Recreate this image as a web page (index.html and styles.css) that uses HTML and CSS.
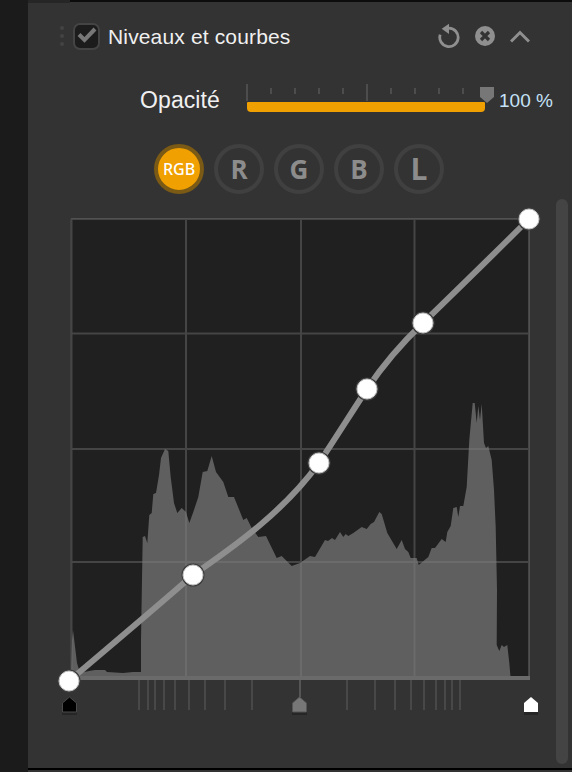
FILE: index.html
```html
<!DOCTYPE html>
<html lang="fr">
<head>
    <meta charset="UTF-8">
    <meta name="viewport" content="width=device-width, initial-scale=1.0">
    <title>Niveaux et courbes</title>
    <link rel="stylesheet" href="styles.css">
</head>
<body>
    <div class="gutter"></div>
    <div class="panel">
        <div class="topbar"><div class="topbar-left"></div><div class="topbar-right"></div></div>
        <div class="header">
            <div class="grip"><span></span><span></span><span></span></div>
            <div class="check">
                <svg width="22" height="22" viewBox="0 0 22 22"><path d="M3 9.500 L8.500 15 L19 4" fill="none" stroke="#787878" stroke-width="4"/></svg>
            </div>
            <div class="title">Niveaux et courbes</div>
            <div class="tools">
                <svg width="22" height="26" viewBox="0 0 22 26"><path d="M11 5.200 A9.200 9.200 0 1 1 2.200 11.600" fill="none" stroke="#8f8f8f" stroke-width="2.800"/><path d="M3.700 5.700 L11 0.700 V11 Z" fill="#8f8f8f"/></svg>
                <svg width="20" height="20" viewBox="0 0 20 20"><circle cx="10" cy="10" r="10" fill="#8f8f8f"/><path d="M6 6 L14 14 M14 6 L6 14" stroke="#333" stroke-width="3.200"/></svg>
                <svg width="20" height="13" viewBox="0 0 20 13"><path d="M1 11.500 L10 2.500 L19 11.500" fill="none" stroke="#8f8f8f" stroke-width="3"/></svg>
            </div>
        </div>

        <div class="opacity">
            <div class="opacity-label">Opacité</div>
            <div class="slider">
                <svg class="ticks" width="240" height="17" viewBox="0 0 240 17">
                    <path d="M1 0V17M121 0V17" stroke="#4d4d4d" stroke-width="2"/>
                    <path d="M25 4V10M49 4V10M73 4V10M97 4V10M145 4V10M169 4V10M193 4V10M217 4V10" stroke="#4d4d4d" stroke-width="2"/>
                </svg>
                <div class="slider-bar"></div>
                <svg class="slider-thumb" width="14" height="16" viewBox="0 0 14 16"><path d="M0 0 H14 V10 L7 16 L0 10 Z" fill="#777"/></svg>
            </div>
            <div class="opacity-value">100 %</div>
        </div>

        <div class="channels">
            <div class="channel active">RGB</div>
            <div class="channel">R</div>
            <div class="channel">G</div>
            <div class="channel">B</div>
            <div class="channel channel-l">L</div>
        </div>

        <div class="curve-row">
            <svg class="curve" width="528" height="565" viewBox="28 199 528 565">
                <rect x="71" y="219" width="458" height="460" fill="#202020"/>
                <path fill="#5f5f5f" d="M71 679 L72 640 L73 630 L77 663 L80 673 L89 671 L95 670 L105 670 L107 672 L123 673 L133 672 L141 672 L141 640 L142.700 537 L145 536 L147.300 543 L149.300 515 L151.700 513 L153.300 494 L156 493 L159 475 L161 458 L165 449 L168.300 451 L170.700 477 L174 503 L177.300 513 L181.700 508 L186 512 L189.300 523 L193.300 512 L198.300 497 L202.700 472 L207.300 471 L211.700 456 L216 472 L223.300 482 L228.300 497 L234 497 L243.300 520 L246.700 518 L251.700 528 L258.300 537 L266 536 L276.700 558 L281.700 556 L291.700 566 L300 563 L310 556 L315 557 L325 540 L328 541 L332 538 L335 540 L340 532 L343.300 537 L345.700 534 L348.300 536 L353.300 533 L361.700 527 L366.700 529 L370.700 524 L374 522 L379.300 512 L381.700 514 L387.300 533 L396.700 549 L401.700 540 L405 549 L408.300 552 L410.700 558 L416.700 558 L418.700 565 L428.300 557 L431.700 548 L435 548 L441.700 539 L445.700 542 L447.300 532 L450.700 526 L453.300 508 L456.700 507 L458.300 517 L460 506 L463.300 506 L466.700 487 L469.300 440 L472.700 403 L474.700 403 L476.700 423 L478.300 406 L480 420 L481.700 404 L484 443 L486 448 L488.300 446 L491.700 460 L494 490 L495.700 527 L497 590 L496.700 645 L499.300 651 L501.700 645 L504 647 L507.300 645 L509.300 663 L510.700 679 Z"/>
                <path fill="none" stroke="#7c7c7c" stroke-opacity=".41" stroke-width="2" d="M71 219H530M71 333.500H530M71 449H530M71 562H530M71.500 219V679M186 219V679M301 219V679M414.500 219V679M529 219V679"/>
                <path fill="none" stroke="#6a6a6a" stroke-width="4" d="M71 678H530"/>
                <path fill="none" stroke="#484848" stroke-width="2" d="M139 680V710M148 680V710M155 680V710M164 680V710M175 680V710M189 680V710M205 680V710M225 680V710M252 680V710M347 680V710M375 680V710M395 680V710M411 680V710M424 680V710M436 680V710M445 680V710M452 680V710M460 680V710"/>
                <path fill="none" stroke="#555" stroke-width="2" d="M300 680V697"/>
                <path fill="none" stroke="#8e8e8e" stroke-width="6" d="M69 681 C90 663 152 611 193 575 C238 544 285 510 319 463 C333 442 350 415 367 389 C385 362 402 343 423 323 C458 289 494 254 529 219"/>
                <g fill="#3c3c3c">
                    <circle cx="69" cy="681" r="11.500"/>
                    <circle cx="193" cy="575" r="11.500"/>
                    <circle cx="319" cy="463" r="11.500"/>
                    <circle cx="367" cy="389" r="11.500"/>
                    <circle cx="423" cy="323" r="11.500"/>
                    <circle cx="529" cy="219" r="11.500"/>
                </g>
                <g fill="#fff" stroke="#c4c4c4">
                    <circle cx="69" cy="681" r="10"/>
                    <circle cx="193" cy="575" r="10"/>
                    <circle cx="319" cy="463" r="10"/>
                    <circle cx="367" cy="389" r="10"/>
                    <circle cx="423" cy="323" r="10"/>
                    <circle cx="529" cy="219" r="10"/>
                </g>
                <g stroke-linejoin="round">
                    <path d="M62 715H77V712H62Z" fill="#262626"/>
                    <path d="M62.500 712H76.500V703L69.500 697L62.500 703Z" fill="#000" stroke="#4a4a4a"/>
                    <path d="M292 715H307V712H292Z" fill="#262626"/>
                    <path d="M292.500 712H306.500V703L299.500 697L292.500 703Z" fill="#777" stroke="#555"/>
                    <path d="M524 715H538V712H524Z" fill="#262626"/>
                    <path d="M524 712H538V703L531 697L524 703Z" fill="#fff"/>
                </g>
            </svg>
            <div class="scrollbar"></div>
        </div>
    </div>
</body>
</html>
```
FILE: styles.css
```css
html, body {
    margin: 0;
    padding: 0;
    height: 100%;
    overflow: hidden;
}

body {
    background-color: #333;
    color: #f0f0f0;
    font-family: 'Liberation Sans', Arial, sans-serif;
    display: flex;
    height: 772px;
}

.gutter {
    width: 28px;
    height: 772px;
    background-color: #1b1b1b;
}

.panel {
    width: 544px;
    height: 770px;
    border-bottom: 2px solid #000;
    box-sizing: border-box;
    background-color: #333;
    display: flex;
    flex-direction: column;
}

.topbar {
    display: flex;
    align-items: flex-start;
    height: 3px;
}
.topbar-left {
    width: 42px;
    height: 3px;
    background-color: #262626;
}
.topbar-right {
    flex: 1;
    height: 2px;
    background-color: #0c0c0c;
}

.header {
    display: flex;
    align-items: center;
    height: 66px;
    padding-left: 32px;
}

.grip {
    display: flex;
    flex-direction: column;
    gap: 4px;
    width: 13px;
}
.grip span {
    display: block;
    width: 4px;
    height: 4px;
    border-radius: 50%;
    background-color: #444;
}

.check {
    width: 27px;
    height: 27px;
    box-sizing: border-box;
    border: 2px solid #444;
    border-radius: 7px;
    background-color: #1c1c1c;
    display: flex;
    align-items: center;
    justify-content: center;
}

.title {
    font-size: 21px;
    letter-spacing: 0.15px;
    margin-left: 8px;
    padding-top: 2px;
    flex: 1;
}

.tools {
    display: flex;
    align-items: center;
    gap: 15px;
    margin-right: 42px;
}

.opacity {
    display: flex;
    align-items: center;
    height: 57px;
}

.opacity-label {
    font-size: 23px;
    letter-spacing: 0.1px;
    margin-left: 112px;
    width: 106px;
    padding-top: 6px;
}

.slider {
    position: relative;
    width: 240px;
    height: 28px;
}
.slider .ticks {
    display: block;
}
.slider-bar {
    height: 10px;
    margin-top: 1px;
    margin-left: 1px;
    margin-right: 1px;
    background-color: #f0a000;
    border-radius: 1px 1px 4px 4px;
}
.slider-thumb {
    position: absolute;
    right: -8px;
    top: 3px;
}

.opacity-value {
    font-size: 19px;
    color: #c6e2f6;
    margin-left: 13px;
    padding-top: 6px;
}

.channels {
    display: flex;
    gap: 10px;
    margin-left: 126px;
    margin-top: 18px;
    height: 50px;
}

.channel {
    width: 50px;
    height: 50px;
    box-sizing: border-box;
    border: 4px solid #404040;
    border-radius: 50%;
    display: flex;
    align-items: center;
    justify-content: center;
    font-family: 'Open Sans', sans-serif;
    font-weight: 700;
    font-size: 26px;
    color: #8c8c8c;
}
.channel-l {
    font-size: 30px;
    padding-bottom: 2px;
    box-sizing: border-box;
}
.channel.active {
    background-color: #f0a000;
    border-color: #7a5a14;
    color: #fff;
    font-family: 'Noto Sans', sans-serif;
    font-size: 16px;
    font-weight: 500;
}

.curve-row {
    display: flex;
    margin-top: 5px;
}
.curve {
    display: block;
}

.scrollbar {
    width: 12px;
    height: 565px;
    background-color: #444;
    border-radius: 6px;
}
```
